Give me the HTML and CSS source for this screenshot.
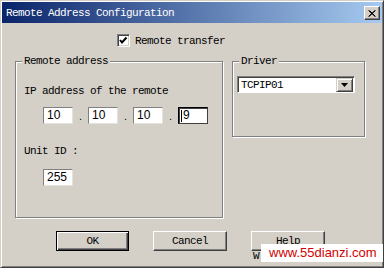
FILE: index.html
```html
<!DOCTYPE html>
<html lang="en">
<head>
  <meta charset="UTF-8" />
  <title>Remote Address Configuration</title>
  <link rel="stylesheet" href="styles.css">
</head>
<body>

  <div class="window">
    <!-- Title bar -->
    <div class="titlebar">
      <span class="title">Remote Address Configuration</span>
      <span class="close" aria-label="Close">
        <svg width="8" height="7" viewBox="0 0 8 7">
          <path d="M0.5 0.5 L7 6.5 M1.5 0.5 L7.5 6.5 M7 0.5 L0.5 6.5 M7.5 0.5 L1 6.5" stroke="#000" stroke-width="1" fill="none"/>
        </svg>
      </span>
    </div>

    <div class="content">
      <label class="check-row">
        <span class="checkbox">
          <svg width="9" height="9" viewBox="0 0 9 9">
            <polyline points="1,4 3,6.5 7.5,1.5" stroke="#000" stroke-width="2" fill="none"/>
          </svg>
        </span>
        <span>Remote transfer</span>
      </label>

      <div class="groups">
        <div class="group group-remote">
          <span class="group-title">Remote address</span>
          <div class="field-label">IP address of the remote</div>
          <div class="ip-row">
            <span class="edit">10</span><span class="dot">.</span>
            <span class="edit">10</span><span class="dot">.</span>
            <span class="edit">10</span><span class="dot">.</span>
            <span class="edit focused"><span class="caret"></span>9</span>
          </div>
          <div class="field-label unit-label">Unit ID :</div>
          <span class="edit unit-edit">255</span>
        </div>

        <div class="group group-driver">
          <span class="group-title">Driver</span>
          <div class="select">
            <span class="select-value">TCPIP01</span>
            <span class="select-btn">
              <svg width="7" height="4" viewBox="0 0 7 4"><path d="M0 0 H7 L3.5 4 Z" fill="#000"/></svg>
            </span>
          </div>
        </div>
      </div>

      <div class="buttons">
        <span class="btn default">OK</span>
        <span class="btn">Cancel</span>
        <span class="btn">Help</span>
      </div>
    </div>

    <span class="behind">W</span>
    <div class="watermark">www.55dianzi.com</div>
  </div>

</body>
</html>
```

FILE: styles.css
```css
* {
  margin: 0;
  padding: 0;
  box-sizing: border-box;
}
body {
  background: #d4d0c8;
  font-family: 'Liberation Mono', 'DejaVu Sans Mono', monospace;
  font-size: 11px;
  letter-spacing: -0.6px;
  color: #000;
}

/* Fenêtre */
.window {
  position: relative;
  width: 384px;
  height: 268px;
  background: #d4d0c8;
  border: 1px solid;
  border-color: #d4d0c8 #404040 #404040 #d4d0c8;
  box-shadow: inset 1px 1px 0 #fff, inset -1px -1px 0 #808080;
  padding: 1px;
  overflow: hidden;
}

.titlebar {
  height: 21px;
  background: linear-gradient(to right, #0a246a, #a6caf0);
  display: flex;
  align-items: center;
  justify-content: space-between;
  padding: 0 2px 0 4px;
}
.title {
  color: #fff;
  line-height: 12px;
}
.close {
  width: 16px;
  height: 14px;
  background: #d4d0c8;
  border: 1px solid;
  border-color: #fff #404040 #404040 #fff;
  box-shadow: inset -1px -1px 0 #808080;
  display: flex;
  align-items: center;
  justify-content: center;
  margin-top: 1px;
}

.content {
  padding: 11px 0 0 13px;
}

/* Case à cocher */
.check-row {
  display: flex;
  align-items: center;
  gap: 5px;
  padding-left: 102px;
  height: 13px;
  line-height: 12px;
}
.checkbox {
  width: 13px;
  height: 13px;
  background: #fff;
  border: 1px solid;
  border-color: #808080 #fff #fff #808080;
  box-shadow: inset 1px 1px 0 #404040, inset -1px -1px 0 #d4d0c8;
  display: flex;
  align-items: center;
  justify-content: center;
}

/* Groupes */
.groups {
  display: flex;
  align-items: flex-start;
  gap: 9px;
  margin-top: 14px;
}
.group {
  position: relative;
  border: 1px solid #808080;
  box-shadow: inset 1px 1px 0 #fff, 1px 1px 0 #fff;
}
.group-title {
  position: absolute;
  top: -7px;
  left: 6px;
  padding: 0 2px;
  line-height: 12px;
  background: #d4d0c8;
}
.group-remote {
  width: 208px;
  height: 157px;
  padding: 23px 0 0 8px;
}
.group-driver {
  width: 133px;
  height: 76px;
  padding: 14px 0 0 4px;
}

.field-label {
  line-height: 12px;
}
.unit-label {
  margin-top: 19px;
}

.ip-row {
  display: flex;
  margin: 10px 0 0 19px;
}
.dot {
  width: 15px;
  text-align: center;
  line-height: 19px;
  font-family: 'Liberation Sans', Arial, sans-serif;
  font-size: 11px;
  letter-spacing: 0;
}

.edit {
  display: block;
  width: 30px;
  height: 17px;
  background: #fff;
  border: 1px solid;
  border-color: #808080 #e4e2dc #e4e2dc #808080;
  padding-left: 3px;
  font-family: 'Liberation Sans', Arial, sans-serif;
  font-size: 12px;
  letter-spacing: 0;
  line-height: 15px;
}
.edit.focused {
  border-color: #000 #404040 #404040 #000;
  box-shadow: inset 1px 1px 0 #404040;
  padding-left: 2px;
  display: flex;
  align-items: center;
}
.caret {
  width: 1px;
  height: 12px;
  background: #000;
  margin-right: 1px;
}
.unit-edit {
  margin: 12px 0 0 19px;
}

/* Liste déroulante */
.select {
  width: 118px;
  height: 17px;
  background: #fff;
  border: 1px solid;
  border-color: #808080 #fff #fff #808080;
  box-shadow: inset 1px 1px 0 #404040;
  display: flex;
  align-items: center;
  justify-content: space-between;
  padding: 1px 1px 0 3px;
}
.select-value {
  line-height: 12px;
}
.select-btn {
  width: 17px;
  height: 14px;
  background: #d4d0c8;
  border: 1px solid;
  border-color: #d4d0c8 #404040 #404040 #d4d0c8;
  box-shadow: inset 1px 1px 0 #fff, inset -1px -1px 0 #808080;
  display: flex;
  align-items: center;
  justify-content: center;
}

/* Boutons */
.buttons {
  display: flex;
  gap: 24px;
  margin-top: 13px;
  padding-left: 41px;
}
.btn {
  width: 74px;
  height: 20px;
  border: 1px solid;
  border-color: #fff #404040 #404040 #fff;
  box-shadow: inset -1px -1px 0 #808080;
  display: flex;
  align-items: center;
  justify-content: center;
  line-height: 12px;
}
.btn.default {
  width: 73px;
  border-color: #000;
  box-shadow: inset 1px 1px 0 #fff, inset -1px -1px 0 #404040, inset -2px -2px 0 #808080;
}

/* Filigrane */
.behind {
  position: absolute;
  left: 252px;
  top: 249px;
  line-height: 12px;
}
.watermark {
  position: absolute;
  left: 260px;
  top: 243px;
  width: 124px;
  height: 18px;
  background: #fff;
  color: #d40000;
  font-family: 'Liberation Sans', Arial, sans-serif;
  font-size: 13px;
  letter-spacing: 0;
  line-height: 18px;
  padding-left: 8px;
}
```
